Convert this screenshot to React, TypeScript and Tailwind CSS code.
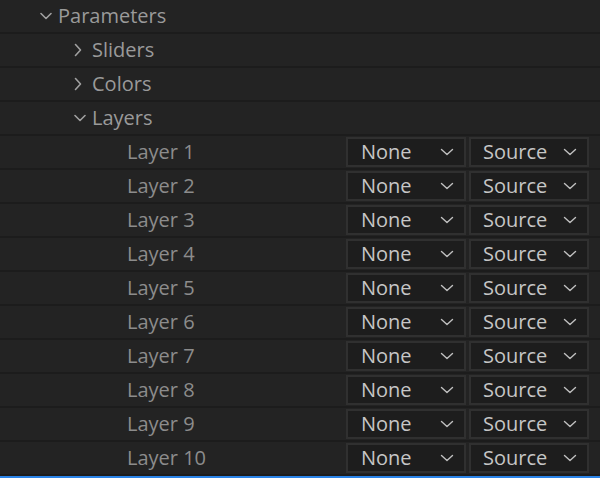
import React from "react";

const font = { fontFamily: '"Open Sans", "Noto Sans", sans-serif' };

function ChevronDown({ className = "" }: { className?: string }) {
  return (
    <svg width="12" height="8" viewBox="0 0 12 8" className={className}>
      <path d="M1 1.5 L6 6.5 L11 1.5" fill="none" stroke="currentColor" strokeWidth="1.6" strokeLinecap="round" strokeLinejoin="round" />
    </svg>
  );
}

function ChevronRight({ className = "" }: { className?: string }) {
  return (
    <svg width="12" height="14" viewBox="0 0 12 14" className={className}>
      <path d="M3.5 1.5 L8.5 7 L3.5 12.5" fill="none" stroke="currentColor" strokeWidth="1.6" strokeLinecap="round" strokeLinejoin="round" />
    </svg>
  );
}

function Row({ children }: { children: React.ReactNode }) {
  return (
    <div className="h-[34px] border-b-2 border-[#1c1c1c] flex items-center">{children}</div>
  );
}

function Select({ label, padLeft }: { label: string; padLeft: string }) {
  return (
    <div className={`h-[30px] w-[120px] border-2 border-[#303030] bg-[#1d1d1d] flex items-center justify-between ${padLeft} pr-[10px] text-[20px] text-[#c6c6c6]`}>
      <span className="leading-none">{label}</span>
      <svg width="14" height="8" viewBox="0 0 14 8" className="text-[#c0c0c0]">
        <path d="M1.5 1.5 L7 6.5 L12.5 1.5" fill="none" stroke="currentColor" strokeWidth="1.4" strokeLinecap="round" strokeLinejoin="round" />
      </svg>
    </div>
  );
}

export default function App() {
  const layers = Array.from({ length: 10 }, (_, i) => i + 1);
  return (
    <div className="w-[600px] h-[478px] bg-[#232323] overflow-hidden flex flex-col" style={font}>
      <Row>
        <div className="pl-[40px] flex items-center text-[20px] text-[#9a9a9a]">
          <ChevronDown className="text-[#a0a0a0]" />
          <span className="ml-[6px] leading-none">Parameters</span>
        </div>
      </Row>
      <Row>
        <div className="pl-[72px] flex items-center text-[20px] text-[#9a9a9a]">
          <ChevronRight className="text-[#a0a0a0]" />
          <span className="ml-[8px] leading-none">Sliders</span>
        </div>
      </Row>
      <Row>
        <div className="pl-[72px] flex items-center text-[20px] text-[#9a9a9a]">
          <ChevronRight className="text-[#a0a0a0]" />
          <span className="ml-[8px] leading-none">Colors</span>
        </div>
      </Row>
      <Row>
        <div className="pl-[74px] flex items-center text-[20px] text-[#9a9a9a]">
          <ChevronDown className="text-[#a0a0a0]" />
          <span className="ml-[6px] leading-none">Layers</span>
        </div>
      </Row>
      {layers.map((n) => (
        <Row key={n}>
          <div className="w-[346px] shrink-0 pl-[127px] text-[20px] text-[#8c8c8c] leading-none">Layer {n}</div>
          <div className="flex gap-[3px]">
            <Select label="None" padLeft="pl-[13px]" />
            <Select label="Source" padLeft="pl-[12px]" />
          </div>
        </Row>
      ))}
      <div className="flex-1" />
      <div className="h-[2px] bg-[#2b84e8]" />
    </div>
  );
}
